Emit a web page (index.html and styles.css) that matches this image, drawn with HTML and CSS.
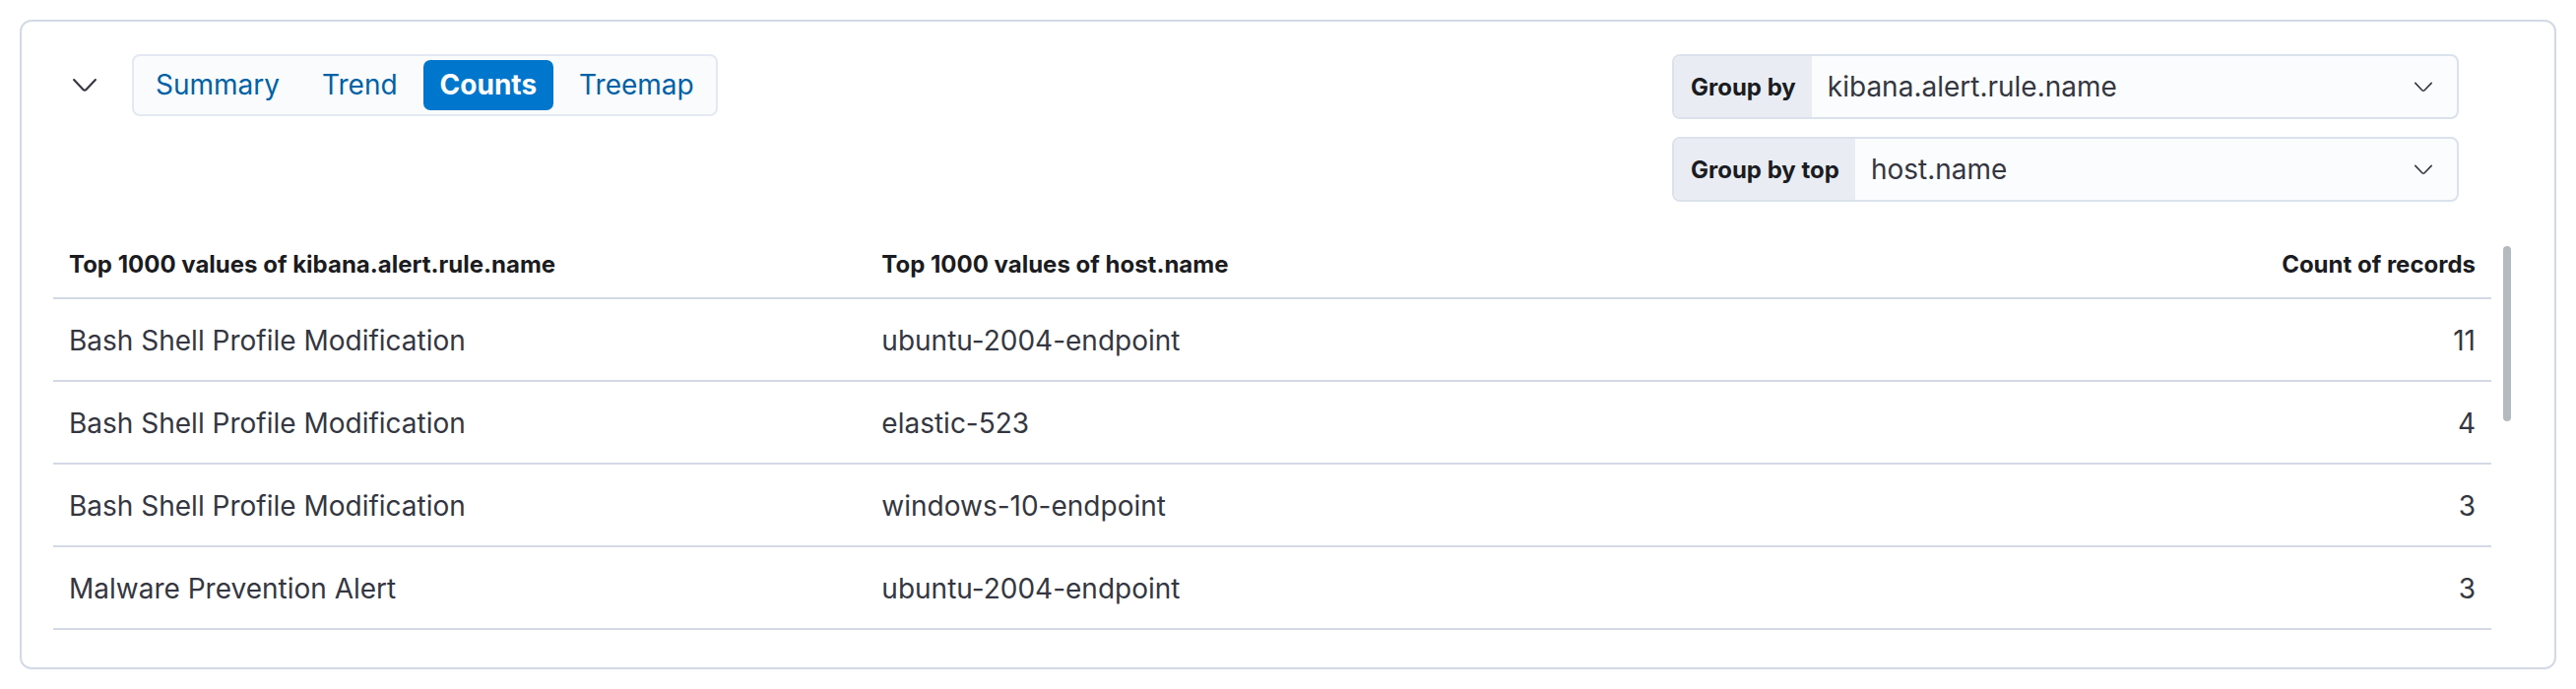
FILE: index.html
```html
<!DOCTYPE html>
<html lang="en">
<head>
<meta charset="utf-8">
<title>Alerts counts</title>
<link rel="stylesheet" href="styles.css">
</head>
<body>
<div class="page">
  <section class="panel">
    <div class="panel-header">
      <div class="left-controls">
        <button class="toggle" type="button" aria-label="Collapse">
          <svg class="toggle-icon" viewBox="0 0 16 16" width="32" height="32"><path d="M13.069 5.157 8.384 10.1a.546.546 0 0 1-.768 0L2.93 5.158a.552.552 0 0 0-.771 0 .53.53 0 0 0 0 .759l4.684 4.938c.641.64 1.673.64 2.312 0l4.684-4.938a.53.53 0 0 0 0-.76.552.552 0 0 0-.771 0Z"/></svg>
        </button>
        <div class="tabs">
          <button class="tab" type="button">Summary</button>
          <button class="tab" type="button">Trend</button>
          <button class="tab tab-active" type="button">Counts</button>
          <button class="tab" type="button">Treemap</button>
        </div>
      </div>
      <div class="selects">
        <div class="select">
          <span class="prepend">Group by</span>
          <span class="value">kibana.alert.rule.name</span>
          <svg class="select-icon" viewBox="0 0 16 16" width="24" height="24"><path d="M13.069 5.157 8.384 10.1a.546.546 0 0 1-.768 0L2.93 5.158a.552.552 0 0 0-.771 0 .53.53 0 0 0 0 .759l4.684 4.938c.641.64 1.673.64 2.312 0l4.684-4.938a.53.53 0 0 0 0-.76.552.552 0 0 0-.771 0Z"/></svg>
        </div>
        <div class="select">
          <span class="prepend">Group by top</span>
          <span class="value">host.name</span>
          <svg class="select-icon" viewBox="0 0 16 16" width="24" height="24"><path d="M13.069 5.157 8.384 10.1a.546.546 0 0 1-.768 0L2.93 5.158a.552.552 0 0 0-.771 0 .53.53 0 0 0 0 .759l4.684 4.938c.641.64 1.673.64 2.312 0l4.684-4.938a.53.53 0 0 0 0-.76.552.552 0 0 0-.771 0Z"/></svg>
        </div>
      </div>
    </div>
    <div class="table-area">
      <div class="table-wrap">
        <table class="grid">
          <colgroup><col class="c"><col class="c"><col class="c"></colgroup>
          <thead>
            <tr>
              <th>Top 1000 values of kibana.alert.rule.name</th>
              <th>Top 1000 values of host.name</th>
              <th class="num">Count of records</th>
            </tr>
          </thead>
          <tbody>
            <tr><td>Bash Shell Profile Modification</td><td>ubuntu-2004-endpoint</td><td class="num">11</td></tr>
            <tr><td>Bash Shell Profile Modification</td><td>elastic-523</td><td class="num">4</td></tr>
            <tr><td>Bash Shell Profile Modification</td><td>windows-10-endpoint</td><td class="num">3</td></tr>
            <tr><td>Malware Prevention Alert</td><td>ubuntu-2004-endpoint</td><td class="num">3</td></tr>
          </tbody>
        </table>
      </div>
      <div class="scroll-track"><div class="scroll-thumb"></div></div>
    </div>
  </section>
</div>
</body>
</html>
```
FILE: styles.css
```css
* { box-sizing: border-box; }
html, body { margin: 0; padding: 0; background: #ffffff; }
body {
  font-family: Inter, "Noto Sans", "Liberation Sans", sans-serif;
  color: #343741;
}
.page {
  padding: 20px;
  height: 700px;
}
.panel {
  height: 660px;
  border: 2px solid #d3dae6;
  border-radius: 12px;
  padding: 32px 44px 39px 32px;
  background: #ffffff;
}
.panel-header {
  display: flex;
  justify-content: space-between;
  align-items: flex-start;
  height: 151px;
}
.left-controls {
  display: flex;
  align-items: center;
  gap: 16px;
}
.toggle {
  width: 64px;
  height: 64px;
  border: 0;
  background: transparent;
  padding: 0;
  display: flex;
  align-items: center;
  justify-content: center;
}
.toggle-icon { fill: #343741; }
.tabs {
  display: flex;
  align-items: center;
  gap: 9px;
  height: 63px;
  padding: 0 5px;
  border: 2px solid #e3e8f2;
  border-radius: 8px;
  background: #f9fbfd;
}
.tab {
  height: 51px;
  padding: 0 17px;
  border: 0;
  border-radius: 7px;
  background: transparent;
  font-family: Inter, "Noto Sans", "Liberation Sans", sans-serif;
  font-size: 28px;
  color: #0061a6;
  line-height: 51px;
}
.tab-active {
  background: #0077cc;
  color: #ffffff;
  font-weight: 700;
}
.selects {
  display: flex;
  flex-direction: column;
  gap: 18px;
  width: 799px;
  margin-top: 1px;
  margin-right: 53px;
}
.select {
  display: flex;
  align-items: center;
  height: 66px;
  border: 2px solid #dce2eb;
  border-radius: 8px;
  background: #fbfcfd;
  overflow: hidden;
}
.prepend {
  align-self: stretch;
  display: flex;
  align-items: center;
  padding: 0 16px 0 17px;
  background: #e9edf3;
  font-size: 24px;
  font-weight: 700;
  color: #1a1c21;
  white-space: nowrap;
}
.value {
  flex: 1;
  padding-left: 16px;
  font-size: 28px;
  color: #343741;
  white-space: nowrap;
}
.select-icon {
  fill: #343741;
  margin-right: 22px;
}
.table-area {
  display: flex;
  margin-top: 28px;
}
.table-wrap {
  flex: 1;
  min-width: 0;
}
.grid {
  width: 100%;
  border-collapse: collapse;
  table-layout: fixed;
}
.grid .c { width: 33.333%; }
.grid th, .grid td {
  padding: 0 16px;
  text-align: left;
  border-bottom: 2px solid #d3dae6;
  white-space: nowrap;
}
.grid th {
  height: 70px;
  font-size: 24px;
  font-weight: 700;
  color: #1a1c21;
  padding-top: 2px;
}
.grid td {
  height: 84px;
  font-size: 28px;
  color: #343741;
  padding-top: 2px;
}
.grid .num { text-align: right; }
.scroll-track {
  width: 8px;
  margin-left: 12px;
  padding-top: 17px;
}
.scroll-thumb {
  width: 8px;
  height: 178px;
  border-radius: 4px;
  background: #b5b9c0;
}
```
